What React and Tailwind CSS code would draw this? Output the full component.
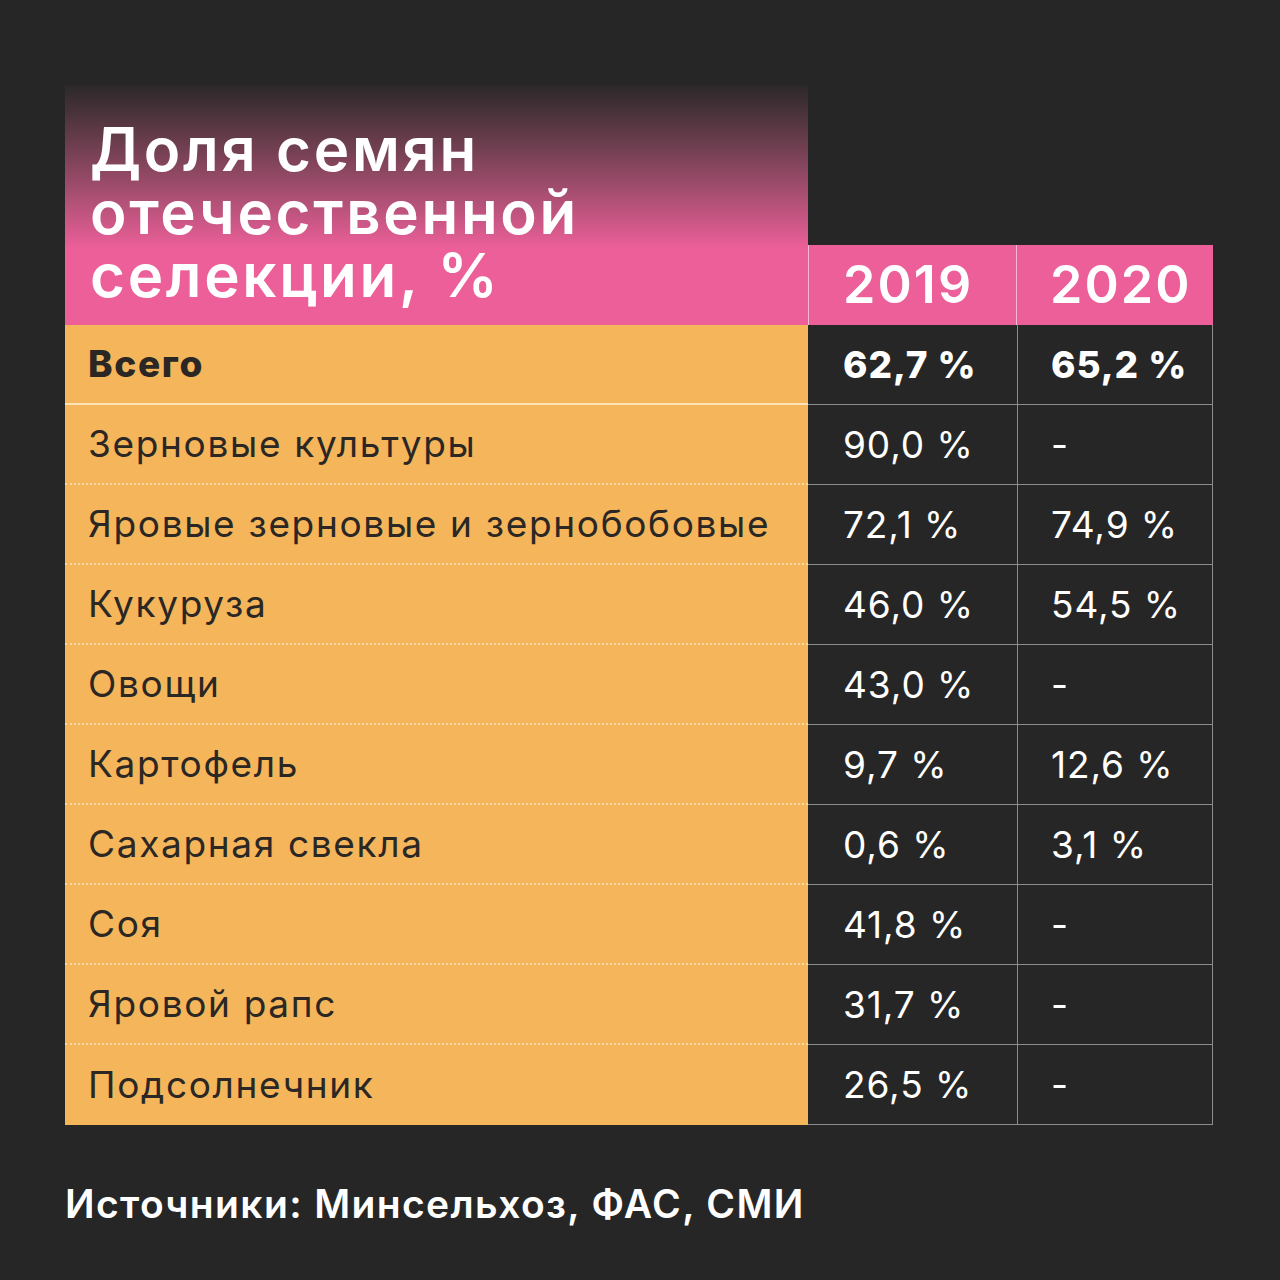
import React from 'react';

// Share of domestic-selection seeds, by crop
const rows = [
    { name: 'Всего', y2019: '62,7 %', y2020: '65,2 %', bold: true },
    { name: 'Зерновые культуры', y2019: '90,0 %', y2020: '-' },
    { name: 'Яровые зерновые и зернобобовые', y2019: '72,1 %', y2020: '74,9 %' },
    { name: 'Кукуруза', y2019: '46,0 %', y2020: '54,5 %' },
    { name: 'Овощи', y2019: '43,0 %', y2020: '-' },
    { name: 'Картофель', y2019: '9,7 %', y2020: '12,6 %' },
    { name: 'Сахарная свекла', y2019: '0,6 %', y2020: '3,1 %' },
    { name: 'Соя', y2019: '41,8 %', y2020: '-' },
    { name: 'Яровой рапс', y2019: '31,7 %', y2020: '-' },
    { name: 'Подсолнечник', y2019: '26,5 %', y2020: '-' },
];

const TableRow = ({ row, index, isLast }) => {
    const leftBorder = isLast
        ? ''
        : index === 0
            ? 'border-b-2 border-[#fde3b8]'
            : 'border-b-2 border-dotted border-[#fbd8a2]';
    const weight = row.bold ? 'font-extrabold' : 'font-normal';

    return (
        <div className="flex h-[80px]">
            <div className={`w-[743px] bg-[#f5b55a] pl-[23px] flex items-center text-[#2a2724] text-[37px] tracking-[0.045em] ${weight} ${leftBorder}`}>
                {row.name}
            </div>
            <div className={`w-[209px] pl-[35px] flex items-center text-white text-[37px] tracking-[0.025em] border-b border-[#8d8d8d] ${weight}`}>
                {row.y2019}
            </div>
            <div className={`w-[196px] pl-[33px] flex items-center text-white text-[37px] tracking-[0.025em] border-b border-l border-r border-[#8d8d8d] ${weight}`}>
                {row.y2020}
            </div>
        </div>
    );
};

const App = () => {
    return (
        <div className="w-[1280px] h-[1280px] bg-[#262626] px-[65px] pt-[85px] font-['Inter',sans-serif]">
            <div className="flex w-[1148px]">
                <div className="w-[743px] h-[240px] bg-linear-to-b from-[#2b2829] to-[#ec5f99] to-[68%] pl-[25px] pt-[33px]">
                    <h1 className="text-white text-[60px] font-semibold leading-[63px] tracking-[0.045em]">
                        Доля семян<br />отечественной<br />селекции, %
                    </h1>
                </div>
                <div className="flex flex-col justify-end w-[405px]">
                    <div className="flex h-[80px] bg-[#ec5f99] border-l border-[#f7b9d2]">
                        <div className="w-[208px] pl-[34px] flex items-center text-white text-[52px] font-semibold tracking-[0.04em] border-r border-[#f7b9d2]">
                            2019
                        </div>
                        <div className="w-[196px] pl-[33px] flex items-center text-white text-[52px] font-semibold tracking-[0.04em]">
                            2020
                        </div>
                    </div>
                </div>
            </div>

            <div className="flex flex-col w-[1148px]">
                {rows.map((row, i) => (
                    <TableRow key={row.name} row={row} index={i} isLast={i === rows.length - 1} />
                ))}
            </div>

            <p className="mt-[50px] text-white text-[39px] font-semibold tracking-[0.035em]">
                Источники: Минсельхоз, ФАС, СМИ
            </p>
        </div>
    );
};

export default App;
